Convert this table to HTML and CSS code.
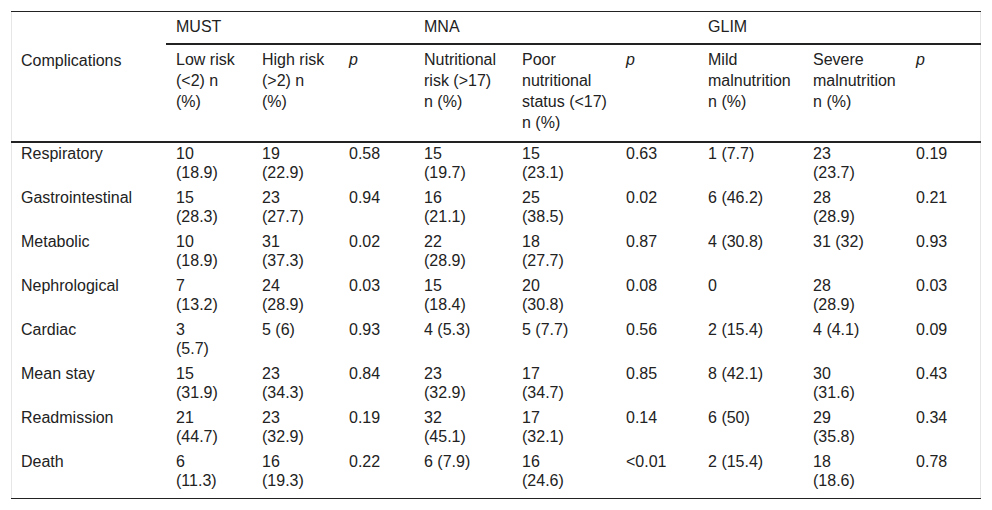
FILE: index.html
```html
<!DOCTYPE html>
<html lang="en">
<head>
<meta charset="utf-8">
<title>Complications table</title>
<link rel="stylesheet" href="styles.css">
</head>
<body>
<div class="frame">
<table class="data">
<colgroup>
<col class="c-name"><col class="c-low"><col class="c-high"><col class="c-p1"><col class="c-nutr"><col class="c-poor"><col class="c-p2"><col class="c-mild"><col class="c-sev"><col class="c-p3">
</colgroup>
<thead>
<tr class="group">
<th></th>
<th colspan="3" class="grp">MUST</th>
<th colspan="3" class="grp">MNA</th>
<th colspan="3" class="grp">GLIM</th>
</tr>
<tr class="sub">
<th>Complications</th>
<th>Low risk (&lt;2) n (%)</th>
<th>High risk (&gt;2) n (%)</th>
<th><i>p</i></th>
<th>Nutritional risk (&gt;17) n (%)</th>
<th>Poor nutritional status (&lt;17) n (%)</th>
<th><i>p</i></th>
<th>Mild malnutrition n (%)</th>
<th>Severe malnutrition n (%)</th>
<th><i>p</i></th>
</tr>
</thead>
<tbody>
<tr><td>Respiratory</td><td>10<br>(18.9)</td><td>19<br>(22.9)</td><td>0.58</td><td>15<br>(19.7)</td><td>15<br>(23.1)</td><td>0.63</td><td>1 (7.7)</td><td>23<br>(23.7)</td><td>0.19</td></tr>
<tr><td>Gastrointestinal</td><td>15<br>(28.3)</td><td>23<br>(27.7)</td><td>0.94</td><td>16<br>(21.1)</td><td>25<br>(38.5)</td><td>0.02</td><td>6 (46.2)</td><td>28<br>(28.9)</td><td>0.21</td></tr>
<tr><td>Metabolic</td><td>10<br>(18.9)</td><td>31<br>(37.3)</td><td>0.02</td><td>22<br>(28.9)</td><td>18<br>(27.7)</td><td>0.87</td><td>4 (30.8)</td><td>31 (32)</td><td>0.93</td></tr>
<tr><td>Nephrological</td><td>7<br>(13.2)</td><td>24<br>(28.9)</td><td>0.03</td><td>15<br>(18.4)</td><td>20<br>(30.8)</td><td>0.08</td><td>0</td><td>28<br>(28.9)</td><td>0.03</td></tr>
<tr><td>Cardiac</td><td>3<br>(5.7)</td><td>5 (6)</td><td>0.93</td><td>4 (5.3)</td><td>5 (7.7)</td><td>0.56</td><td>2 (15.4)</td><td>4 (4.1)</td><td>0.09</td></tr>
<tr><td>Mean stay</td><td>15<br>(31.9)</td><td>23<br>(34.3)</td><td>0.84</td><td>23<br>(32.9)</td><td>17<br>(34.7)</td><td>0.85</td><td>8 (42.1)</td><td>30<br>(31.6)</td><td>0.43</td></tr>
<tr><td>Readmission</td><td>21<br>(44.7)</td><td>23<br>(32.9)</td><td>0.19</td><td>32<br>(45.1)</td><td>17<br>(32.1)</td><td>0.14</td><td>6 (50)</td><td>29<br>(35.8)</td><td>0.34</td></tr>
<tr class="last"><td>Death</td><td>6<br>(11.3)</td><td>16<br>(19.3)</td><td>0.22</td><td>6 (7.9)</td><td>16<br>(24.6)</td><td>&lt;0.01</td><td>2 (15.4)</td><td>18<br>(18.6)</td><td>0.78</td></tr>
</tbody>
</table>
</div>
</body>
</html>
```
FILE: styles.css
```css
html, body {
  margin: 0;
  padding: 0;
  background: #fff;
}
body {
  padding: 11px 11px 0 11px;
  font-family: "Liberation Sans", Arial, Helvetica, sans-serif;
  font-size: 16px;
  color: #222;
}
.frame {
  width: 970px;
  border-left: 1px solid #e6e6e6;
  border-right: 1px solid #e6e6e6;
  box-sizing: border-box;
}
.data {
  width: 970px;
  margin-left: -1px;
  border-collapse: collapse;
  table-layout: fixed;
  border-top: 1px solid #222;
  border-bottom: 1px solid #222;
}
.c-name { width: 155px; }
.c-low { width: 86px; }
.c-high { width: 87px; }
.c-p1 { width: 75px; }
.c-nutr { width: 98px; }
.c-poor { width: 104px; }
.c-p2 { width: 82px; }
.c-mild { width: 105px; }
.c-sev { width: 103px; }
.c-p3 { width: 75px; }
.data th, .data td {
  text-align: left;
  vertical-align: top;
  font-weight: normal;
  padding: 3px 8px 5px 10px;
  line-height: 18px;
}
.group th {
  padding-top: 6px;
  padding-bottom: 7px;
}
.group th.grp {
  border-bottom: 2px solid #222;
}
.sub th {
  padding-top: 4px;
  padding-bottom: 8px;
  line-height: 21px;
  height: 94px;
  box-sizing: border-box;
  border-bottom: 2px solid #222;
}
.sub th:first-child {
  padding-top: 6px;
}
.data tbody td {
  height: 44px;
  box-sizing: border-box;
  padding-top: 1px;
  padding-bottom: 5px;
  line-height: 19px;
}
.data tbody tr.last td {
  height: 47px;
  padding-bottom: 8px;
}
```
